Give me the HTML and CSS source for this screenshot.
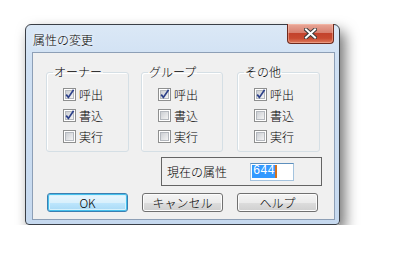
FILE: index.html
```html
<!DOCTYPE html>
<html lang="ja">
<head>
  <meta charset="UTF-8" />
  <title>属性の変更</title>
  <link rel="stylesheet" href="styles.css">
</head>
<body>
  <svg class="defs" width="0" height="0">
    <defs>
      <linearGradient id="cbg" x1="0" y1="0" x2="1" y2="1">
        <stop offset="0" stop-color="#c9ccd1"/>
        <stop offset="1" stop-color="#f6f6f6"/>
      </linearGradient>
    </defs>
  </svg>

  <div class="window">
    <div class="titlebar">
      <span class="title">属性の変更</span>
      <button class="close" aria-label="閉じる">
        <svg width="13" height="11" viewBox="0 0 13 11">
          <path d="M2 1.5 L11 9.5 M11 1.5 L2 9.5" stroke="#3b3b3b" stroke-width="4" stroke-linecap="square"/>
          <path d="M2 1.5 L11 9.5 M11 1.5 L2 9.5" stroke="#fff" stroke-width="2" stroke-linecap="square"/>
        </svg>
      </button>
    </div>

    <div class="client">
      <div class="groups">
        <fieldset class="group">
          <legend>オーナー</legend>
          <label class="row"><svg class="cb" viewBox="0 0 13 13"><rect x=".5" y=".5" width="12" height="12" fill="#fff" stroke="#8e8f8f"/><rect x="2.5" y="2.5" width="8" height="8" fill="url(#cbg)" stroke="#b4b8be"/><path class="tick" d="M3.2 6.6 L5.4 9.4 L10.6 1.8"/></svg>呼出</label>
          <label class="row"><svg class="cb" viewBox="0 0 13 13"><rect x=".5" y=".5" width="12" height="12" fill="#fff" stroke="#8e8f8f"/><rect x="2.5" y="2.5" width="8" height="8" fill="url(#cbg)" stroke="#b4b8be"/><path class="tick" d="M3.2 6.6 L5.4 9.4 L10.6 1.8"/></svg>書込</label>
          <label class="row"><svg class="cb" viewBox="0 0 13 13"><rect x=".5" y=".5" width="12" height="12" fill="#fff" stroke="#8e8f8f"/><rect x="2.5" y="2.5" width="8" height="8" fill="url(#cbg)" stroke="#b4b8be"/></svg>実行</label>
        </fieldset>

        <fieldset class="group mid">
          <legend>グループ</legend>
          <label class="row"><svg class="cb" viewBox="0 0 13 13"><rect x=".5" y=".5" width="12" height="12" fill="#fff" stroke="#8e8f8f"/><rect x="2.5" y="2.5" width="8" height="8" fill="url(#cbg)" stroke="#b4b8be"/><path class="tick" d="M3.2 6.6 L5.4 9.4 L10.6 1.8"/></svg>呼出</label>
          <label class="row"><svg class="cb" viewBox="0 0 13 13"><rect x=".5" y=".5" width="12" height="12" fill="#fff" stroke="#8e8f8f"/><rect x="2.5" y="2.5" width="8" height="8" fill="url(#cbg)" stroke="#b4b8be"/></svg>書込</label>
          <label class="row"><svg class="cb" viewBox="0 0 13 13"><rect x=".5" y=".5" width="12" height="12" fill="#fff" stroke="#8e8f8f"/><rect x="2.5" y="2.5" width="8" height="8" fill="url(#cbg)" stroke="#b4b8be"/></svg>実行</label>
        </fieldset>

        <fieldset class="group last">
          <legend>その他</legend>
          <label class="row"><svg class="cb" viewBox="0 0 13 13"><rect x=".5" y=".5" width="12" height="12" fill="#fff" stroke="#8e8f8f"/><rect x="2.5" y="2.5" width="8" height="8" fill="url(#cbg)" stroke="#b4b8be"/><path class="tick" d="M3.2 6.6 L5.4 9.4 L10.6 1.8"/></svg>呼出</label>
          <label class="row"><svg class="cb" viewBox="0 0 13 13"><rect x=".5" y=".5" width="12" height="12" fill="#fff" stroke="#8e8f8f"/><rect x="2.5" y="2.5" width="8" height="8" fill="url(#cbg)" stroke="#b4b8be"/></svg>書込</label>
          <label class="row"><svg class="cb" viewBox="0 0 13 13"><rect x=".5" y=".5" width="12" height="12" fill="#fff" stroke="#8e8f8f"/><rect x="2.5" y="2.5" width="8" height="8" fill="url(#cbg)" stroke="#b4b8be"/></svg>実行</label>
        </fieldset>
      </div>

      <div class="current">
        <span>現在の属性</span>
        <div class="edit"><span class="sel">644</span><span class="caret"></span></div>
      </div>

      <div class="buttons">
        <button class="btn default">OK</button>
        <button class="btn">キャンセル</button>
        <button class="btn">ヘルプ</button>
      </div>
    </div>
  </div>
</body>
</html>
```

FILE: styles.css
```css
body {
  margin: 0;
  padding: 24px 0 0 25px;
  background: #fff;
  font-family: "Noto Sans CJK JP", "Liberation Sans", sans-serif;
  font-size: 12px;
  font-weight: 300;
  color: #000;
}
.defs {
  position: absolute;
}
.window {
  width: 315px;
  box-sizing: border-box;
  border: 1px solid #3a3f46;
  border-radius: 6px 6px 4px 4px;
  padding: 0 4px 4px 6px;
  background: linear-gradient(to bottom, #dbe8f6 0, #cfe0f3 40px, #c6d9ef 100%);
  box-shadow: 5px 7px 14px rgba(0, 0, 0, 0.55);
}
.titlebar {
  height: 27px;
  display: flex;
  justify-content: space-between;
  align-items: flex-start;
}
.title {
  margin: 8px 0 0 1px;
  line-height: 14px;
  text-shadow: 0 0 6px #fff, 0 0 3px #fff;
}
.close {
  width: 47px;
  height: 20px;
  margin: -1px 1px 0 0;
  padding: 0;
  border: 1px solid #6d2a1d;
  border-top: none;
  border-radius: 0 0 4px 4px;
  background: linear-gradient(to bottom, #e9a899 0, #d88170 45%, #c3432c 50%, #c84a30 75%, #de7b5d 100%);
  box-shadow: inset 0 0 0 1px rgba(255, 200, 180, 0.45);
  display: flex;
  align-items: center;
  justify-content: center;
}
.client {
  border: 1px solid #8d9fb6;
  background: #f0f0f0;
  padding: 13px 14px 7px 13px;
}
.groups {
  display: flex;
}
.group {
  margin: 0;
  padding: 0 0 4px 6px;
  width: 83px;
  box-sizing: border-box;
  border: 1px solid #d5dfe5;
  border-radius: 3px;
  box-shadow: inset 1px 1px 0 #fff;
}
.group.mid {
  width: 82px;
  margin-left: 12px;
}
.group.last {
  margin-left: 14px;
}
.group legend {
  padding: 0 1px;
  line-height: 12px;
}
.group legend + .row {
  margin-top: 6px;
}
.row {
  display: flex;
  align-items: center;
  height: 21px;
  margin-left: 10px;
  gap: 3px;
  line-height: 12px;
}
.cb {
  width: 13px;
  height: 13px;
  flex: none;
  overflow: visible;
}
.tick {
  fill: none;
  stroke: #2d418a;
  stroke-width: 1.7;
  stroke-linejoin: miter;
}
.current {
  margin: 5px 0 0 115px;
  width: 161px;
  height: 29px;
  box-sizing: border-box;
  border: 1px solid #646464;
  display: flex;
  align-items: center;
  justify-content: space-between;
  padding: 0 27px 0 5px;
}
.edit {
  width: 44px;
  height: 18px;
  box-sizing: border-box;
  border: 1px solid #a4c3de;
  border-top-color: #5d8fbd;
  background: #fff;
  padding: 1px 0 0 1px;
  display: flex;
  align-items: flex-start;
}
.sel {
  background: #3399ff;
  color: #fff;
  font-family: "Liberation Mono", monospace;
  font-size: 12px;
  font-weight: 400;
  line-height: 13px;
  height: 13px;
  padding: 0 0 0 1px;
}
.caret {
  width: 2px;
  height: 13px;
  background: #d4701c;
}
.buttons {
  display: flex;
  gap: 14px;
  margin-top: 7px;
  padding-left: 1px;
}
.btn {
  width: 81px;
  height: 19px;
  padding: 0;
  font-family: inherit;
  font-size: 12px;
  font-weight: 300;
  line-height: 12px;
  color: #000;
  border: 1px solid #707070;
  border-radius: 3px;
  background: linear-gradient(to bottom, #f4f4f4 0, #ebebeb 50%, #dddddd 51%, #cfcfcf 100%);
  box-shadow: inset 0 0 0 1px #fcfcfc;
}
.btn.default {
  border-color: #3c7fb1;
  background: linear-gradient(to bottom, #eaf6fd 0, #d9f0fc 50%, #bee6fd 51%, #a7d9f5 100%);
  box-shadow: inset 0 0 0 1px #47c0ec, inset 0 0 0 2px #d6f1fc;
}
```
